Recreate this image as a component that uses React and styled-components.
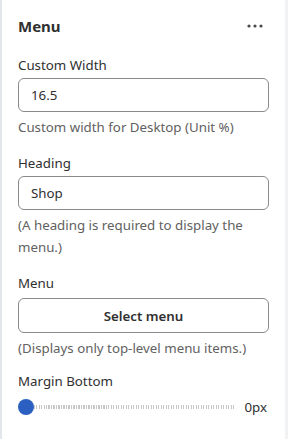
import styled, { createGlobalStyle } from "styled-components";

const Global = createGlobalStyle`
  html, body { margin: 0; padding: 0; background: #f1f2f4; }
  body { font-family: "Noto Sans", "Open Sans", sans-serif; color: #303030; }
  * { box-sizing: border-box; }
`;

const Panel = styled.div`
  width: 285px;
  height: 439px;
  background: #fff;
  border-left: 2px solid #e3e7ec;
  padding: 16px 16px 0 16px;
  display: flex;
  flex-direction: column;
`;

const Header = styled.div`
  display: flex;
  align-items: center;
  justify-content: space-between;
  height: 20px;
  margin-bottom: 19px;
`;

const Title = styled.h2`
  margin: 0;
  font-size: 15px;
  font-weight: 700;
  line-height: 20px;
`;

const MoreBtn = styled.button`
  border: 0;
  background: none;
  padding: 0;
  margin-right: 6px;
  display: flex;
  color: #4a4a4a;
`;

const Field = styled.div`
  display: flex;
  flex-direction: column;
  margin-bottom: ${({ $gap }) => $gap ?? 15}px;
`;

const Label = styled.label`
  font-size: 13.3px;
  line-height: 20px;
  margin-bottom: ${({ $mb }) => $mb ?? 3}px;
`;

const InputBox = styled.div`
  height: 34px;
  border: 1px solid #8a8a8a;
  border-radius: 6px;
  padding: 0 12px;
  display: flex;
  align-items: center;
`;

const Input = styled.input`
  flex: 1;
  min-width: 0;
  border: 0;
  padding: 0;
  margin: 0;
  background: transparent;
  font-family: inherit;
  font-size: 13.3px;
  color: #303030;
  outline: none;
`;

const Button = styled.button`
  height: 35px;
  width: 100%;
  border: 1px solid #8a8a8a;
  border-radius: 6px;
  background: #fff;
  font-family: inherit;
  font-size: 13.3px;
  font-weight: 600;
  color: #303030;
`;

const Help = styled.p`
  margin: 4px 0 0;
  font-size: 13.3px;
  line-height: 22px;
  color: #616161;
`;

const SliderRow = styled.div`
  display: flex;
  align-items: center;
  gap: 9px;
  height: 20px;
`;

const Track = styled.div`
  position: relative;
  flex: 1;
  height: 16px;
  display: flex;
  align-items: center;
  &::before {
    content: "";
    flex: 1;
    margin-left: 8px;
    height: 4px;
    background: repeating-linear-gradient(90deg, #c6c6c6 0 1px, transparent 1px 2.5px);
  }
`;

const Thumb = styled.span`
  position: absolute;
  left: 0;
  top: 0;
  width: 16px;
  height: 16px;
  border-radius: 50%;
  background: #2b5fc1;
`;

const Value = styled.span`
  font-size: 13.3px;
  line-height: 20px;
  margin-right: 2px;
`;

export default function App() {
  return (
    <>
      <Global />
      <Panel>
        <Header>
          <Title>Menu</Title>
          <MoreBtn aria-label="More">
            <svg width="16" height="4" viewBox="0 0 16 4">
              <circle cx="2" cy="2" r="1.6" fill="currentColor" />
              <circle cx="8" cy="2" r="1.6" fill="currentColor" />
              <circle cx="14" cy="2" r="1.6" fill="currentColor" />
            </svg>
          </MoreBtn>
        </Header>

        <Field>
          <Label>Custom Width</Label>
          <InputBox>
            <Input defaultValue="16.5" />
          </InputBox>
          <Help>Custom width for Desktop (Unit %)</Help>
        </Field>

        <Field>
          <Label>Heading</Label>
          <InputBox>
            <Input defaultValue="Shop" />
          </InputBox>
          <Help>(A heading is required to display the menu.)</Help>
        </Field>

        <Field $gap={12}>
          <Label $mb={5}>Menu</Label>
          <Button>Select menu</Button>
          <Help>(Displays only top-level menu items.)</Help>
        </Field>

        <Field>
          <Label $mb={6}>Margin Bottom</Label>
          <SliderRow>
            <Track>
              <Thumb />
            </Track>
            <Value>0px</Value>
          </SliderRow>
        </Field>
      </Panel>
    </>
  );
}
